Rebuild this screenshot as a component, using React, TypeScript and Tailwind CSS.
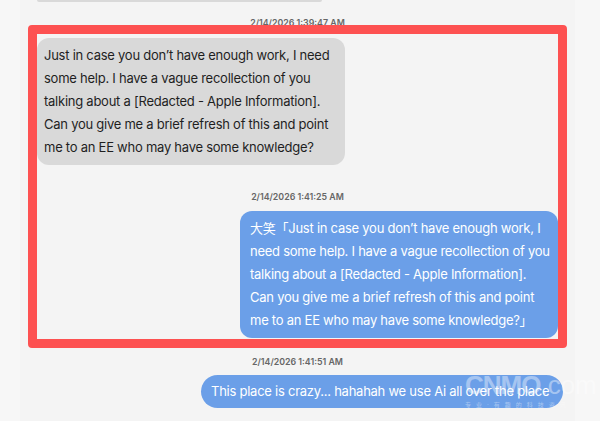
export default function App() {
  const grayLines = [
    'Just in case you don\u2019t have enough work, I need',
    'some help. I have a vague recollection of you',
    'talking about a [Redacted - Apple Information].',
    'Can you give me a brief refresh of this and point',
    'me to an EE who may have some knowledge?',
  ];
  const blueLines = [
    '大笑「Just in case you don\u2019t have enough work, I',
    'need some help. I have a vague recollection of you',
    'talking about a [Redacted - Apple Information].',
    'Can you give me a brief refresh of this and point',
    'me to an EE who may have some knowledge?」',
  ];

  return (
    <div
      className="relative h-[421px] w-[600px] overflow-hidden bg-[#f7f7f7]"
      style={{ fontFamily: 'Inter, "Noto Sans CJK SC", sans-serif' }}
    >
      <div className="ml-[20px] flex h-full w-[555px] flex-col bg-[#f4f4f4]">
        {/* tail of the previous bubble */}
        <div className="ml-[17px] h-[2px] w-[285px] rounded-b-xl bg-[#d9d9d9]" />

        <div className="mt-[14px] h-[14px] text-center text-[8.8px] font-semibold leading-[14px] text-[#666]">
          2/14/2026 1:39:47 AM
        </div>

        <div className="ml-[17px] mt-[8px] w-[308px] rounded-xl bg-[#d9d9d9] py-[6px] pl-[7px] text-[13px] leading-[23px] tracking-[-0.25px] text-[#1f1f1f]">
          {grayLines.map((l) => (
            <div key={l} className="whitespace-nowrap">
              {l}
            </div>
          ))}
        </div>

        <div className="mt-[25px] h-[14px] text-center text-[8.8px] font-semibold leading-[14px] text-[#666]">
          2/14/2026 1:41:25 AM
        </div>

        <div className="ml-[220px] mt-[7px] w-[318px] rounded-xl bg-[#6b9fe8] py-[6px] pl-[10px] text-[13px] leading-[23px] tracking-[-0.25px] text-white">
          {blueLines.map((l) => (
            <div key={l} className="whitespace-nowrap">
              {l}
            </div>
          ))}
        </div>

        <div className="mt-[17px] h-[14px] text-center text-[8.8px] font-semibold leading-[14px] text-[#666]">
          2/14/2026 1:41:51 AM
        </div>

        <div className="ml-[181px] mt-[6px] flex h-[33px] w-[362px] items-center rounded-full bg-[#6b9fe8] pl-[10px] text-[13px] tracking-[-0.25px] text-white">
          <span className="whitespace-nowrap">This place is crazy... hahahah we use Ai all over the place</span>
        </div>
      </div>

      {/* red highlight frame drawn over the conversation */}
      <div className="pointer-events-none absolute left-[28px] top-[25px] h-[323px] w-[539px] rounded-[4px] border-[9px] border-[#fd5151]" />

      {/* watermark */}
      <div className="pointer-events-none absolute left-[465px] top-[372px] flex flex-col items-start text-white opacity-40">
        <div className="flex items-baseline leading-none" style={{ fontFamily: '"Liberation Sans", sans-serif' }}>
          <span className="text-[26px] font-bold tracking-[-1px]">CNMO</span>
          <span className="text-[26px]">.com</span>
        </div>
        <div className="mt-[2px] text-[6px] tracking-[5px]">专业·有趣的科技资讯</div>
      </div>
    </div>
  );
}
